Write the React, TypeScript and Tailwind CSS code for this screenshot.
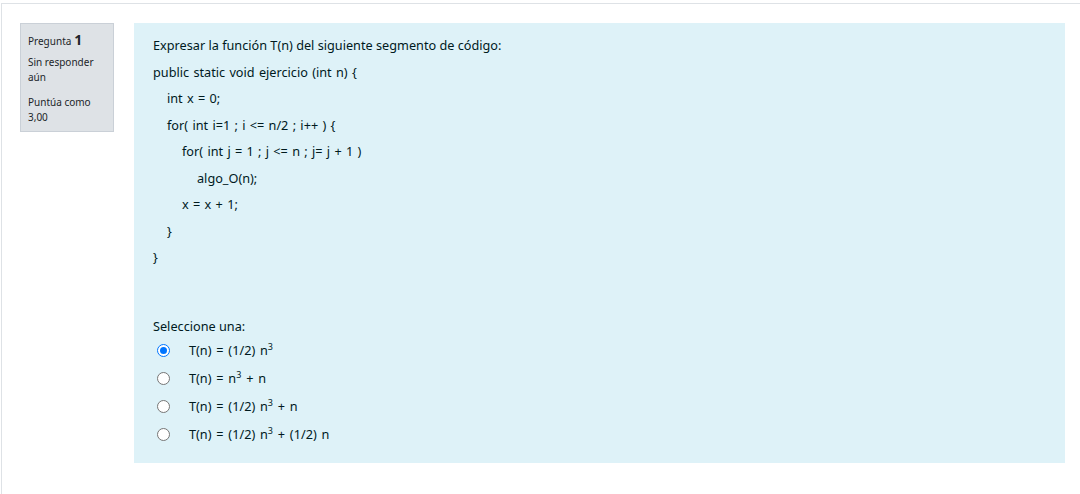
const CODE: [number, string][] = [
  [0, "public static void ejercicio (int n) {"],
  [1, "int x = 0;"],
  [1, "for( int i=1 ; i <= n/2 ; i++ ) {"],
  [2, "for( int j = 1 ; j <= n ; j= j + 1 )"],
  [3, "algo_O(n);"],
  [2, "x = x + 1;"],
  [1, "}"],
  [0, "}"],
];

const OPTIONS = [
  { pre: "T(n) = (1/2) n", post: "" },
  { pre: "T(n) = n", post: " + n" },
  { pre: "T(n) = (1/2) n", post: " + n" },
  { pre: "T(n) = (1/2) n", post: " + (1/2) n" },
];

const INDENT = ["pl-0", "pl-[14px]", "pl-[29px]", "pl-[44px]"];

function Radio({ checked }: { checked: boolean }) {
  if (checked) {
    return (
      <span className="w-[13px] h-[13px] rounded-full border border-[#0075ff] bg-white flex items-center justify-center">
        <span className="w-[7px] h-[7px] rounded-full bg-[#0075ff]" />
      </span>
    );
  }
  return <span className="w-[13px] h-[13px] rounded-full border border-[#767676] bg-white" />;
}

export default function App() {
  return (
    <div className="w-[1080px] h-[494px] bg-white pt-[3px] pl-px font-['Noto_Sans',sans-serif]">
      <div className="h-full border-t border-l border-[#dee2e6] flex items-start pt-[19px] pl-[18px] pr-[15px]">
        <div className="w-[94px] bg-[#dee2e6] border border-[#cad0d7] px-[7px] pt-[8px] pb-[6px] text-[10px] leading-[15px] text-[#212529] shrink-0">
          <div className="flex items-baseline gap-[3px]">
            <span>Pregunta</span>
            <span className="text-[14px] font-bold leading-[15px]">1</span>
          </div>
          <div className="mt-[6px]">Sin responder aún</div>
          <div className="mt-[10px]">Puntúa como 3,00</div>
        </div>
        <div className="ml-[20px] flex-1 h-[440px] bg-[#def2f8] pl-[19px] pt-[9px] text-[12.7px] text-[#001a1e]">
          <div className="leading-[26.5px]">
            <div>Expresar la función T(n) del siguiente segmento de código:</div>
            {CODE.map(([lvl, txt], i) => (
              <div key={i} className={`${INDENT[lvl]} [word-spacing:1px]`}>{txt}</div>
            ))}
          </div>
          <div className="mt-[44px] leading-[22px]">Seleccione una:</div>
          <div className="flex flex-col">
            {OPTIONS.map((o, i) => (
              <div key={i} className="flex items-center h-[28px] pl-[4px]">
                <Radio checked={i === 0} />
                <span className="ml-[19px] [word-spacing:1.5px]">
                  {o.pre}
                  <sup className="text-[9px]">3</sup>
                  {o.post}
                </span>
              </div>
            ))}
          </div>
        </div>
      </div>
    </div>
  );
}
